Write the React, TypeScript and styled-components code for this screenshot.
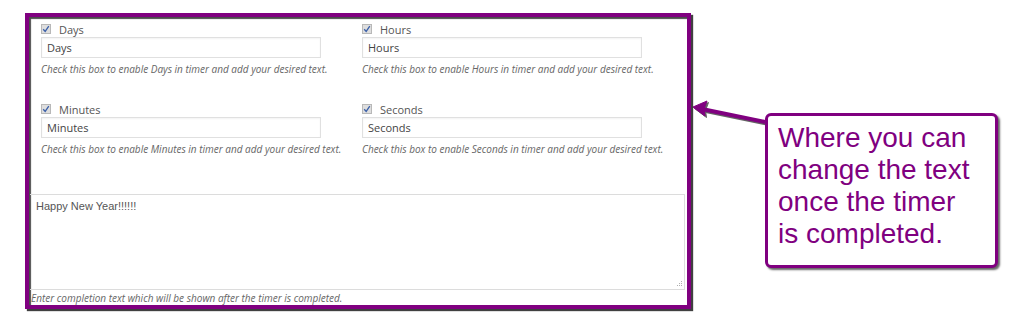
import styled, { createGlobalStyle } from 'styled-components';

const GlobalStyle = createGlobalStyle`
    html, body {
        margin: 0;
        background: #fff;
    }
`;

const PURPLE = '#800080';

interface FieldData {
    name: string;
}

const fields: FieldData[] = [
    { name: 'Days' },
    { name: 'Hours' },
    { name: 'Minutes' },
    { name: 'Seconds' },
];

const calloutLines = ['Where you can', 'change the text', 'once the timer', 'is completed.'];

function CheckBox() {
    return (
        <CheckBoxStyle>
            <svg width="8" height="8" viewBox="0 0 8 8">
                <path d="M1.2 4.2 L3.2 6.4 L6.8 1.2" fill="none" stroke="#3a5fa8" strokeWidth="1.3" />
            </svg>
        </CheckBoxStyle>
    );
}

function Field({ name }: FieldData) {
    return (
        <FieldStyle>
            <CheckRow>
                <CheckBox />
                <span>{name}</span>
            </CheckRow>
            <TextInput value={name} readOnly />
            <Description>Check this box to enable {name} in timer and add your desired text.</Description>
        </FieldStyle>
    );
}

function Arrow() {
    return (
        <ArrowSvg width="73" height="35" viewBox="0 0 73 35">
            <g transform="translate(1.5 1.5)" fill="#222" stroke="#222" opacity="0.7">
                <line x1="10" y1="14" x2="73" y2="27" strokeWidth="4" />
                <polygon points="1,12 15,6 12,14 13,21" strokeWidth="1" />
            </g>
            <line x1="10" y1="14" x2="73" y2="27" stroke={PURPLE} strokeWidth="4" />
            <polygon points="1,12 15,6 12,14 13,21" fill={PURPLE} stroke={PURPLE} strokeWidth="1" />
        </ArrowSvg>
    );
}

function App() {
    return (
        <>
            <GlobalStyle />
            <Page>
                <Frame>
                    <FieldsGrid>
                        {fields.map((f) => (
                            <Field key={f.name} name={f.name} />
                        ))}
                    </FieldsGrid>
                    <CompletionSection>
                        <TextAreaBox>
                            Happy New Year!!!!!!
                            <Grip width="8" height="8" viewBox="0 0 8 8">
                                <rect x="6" y="1" width="1" height="1" />
                                <rect x="6" y="3" width="1" height="1" />
                                <rect x="4" y="3" width="1" height="1" />
                                <rect x="6" y="5" width="1" height="1" />
                                <rect x="4" y="5" width="1" height="1" />
                                <rect x="2" y="5" width="1" height="1" />
                            </Grip>
                        </TextAreaBox>
                        <CompletionHint>Enter completion text which will be shown after the timer is completed.</CompletionHint>
                    </CompletionSection>
                </Frame>
                <Annotation>
                    <Arrow />
                    <Callout>
                        {calloutLines.map((line) => (
                            <CalloutLine key={line}>{line}</CalloutLine>
                        ))}
                    </Callout>
                </Annotation>
            </Page>
        </>
    );
}

const Page = styled.div`
    display: flex;
    align-items: flex-start;
    box-sizing: border-box;
    height: 313px;
    padding: 13px 0 0 25px;
    font-family: "Open Sans", "Noto Sans", sans-serif;
`;

const Frame = styled.div`
    width: 666px;
    height: 296px;
    box-sizing: border-box;
    border: 4px solid ${PURPLE};
    box-shadow: 2px 2px 1px rgba(0, 0, 0, 0.75), inset 2px 2px 1px rgba(0, 0, 0, 0.7);
    display: flex;
    flex-direction: column;
    background: #fff;
`;

const FieldsGrid = styled.div`
    display: grid;
    grid-template-columns: 321px 321px;
    row-gap: 26px;
    padding: 5px 0 0 12px;
`;

const FieldStyle = styled.div`
    display: flex;
    flex-direction: column;
`;

const CheckRow = styled.div`
    display: flex;
    align-items: center;
    gap: 8px;
    height: 14px;
    font-size: 11px;
    color: #555;
`;

const CheckBoxStyle = styled.span`
    width: 10px;
    height: 10px;
    box-sizing: border-box;
    border: 1px solid #b8b8b8;
    background: #dedede;
    display: flex;
    align-items: center;
    justify-content: center;
`;

const TextInput = styled.input`
    margin-top: 1px;
    width: 280px;
    height: 21px;
    box-sizing: border-box;
    border: 1px solid #e0e0e0;
    box-shadow: inset 0 1px 2px rgba(0, 0, 0, 0.05);
    padding: 0 5px;
    font-family: "Open Sans", "Noto Sans", sans-serif;
    font-size: 11px;
    color: #444;
    outline: none;
`;

const Description = styled.p`
    margin: 4px 0 0;
    font-size: 10px;
    line-height: 14px;
    font-style: italic;
    color: #666;
    white-space: nowrap;
`;

const CompletionSection = styled.div`
    margin-top: auto;
    display: flex;
    flex-direction: column;
`;

const TextAreaBox = styled.div`
    position: relative;
    height: 96px;
    margin: 0 2px 0 1px;
    box-sizing: border-box;
    border: 1px solid #dcdcdc;
    border-left: none;
    padding: 5px 6px;
    font-family: "Liberation Sans", Arial, sans-serif;
    font-size: 11px;
    color: #555;
`;

const Grip = styled.svg`
    position: absolute;
    right: 1px;
    bottom: 1px;
    fill: #b0b0b0;
`;

const CompletionHint = styled.p`
    margin: 0;
    padding: 2px 0 0 2px;
    font-size: 10px;
    line-height: 13px;
    font-style: italic;
    color: #666;
    white-space: nowrap;
`;

const Annotation = styled.div`
    display: flex;
    align-items: flex-start;
    margin: 82px 0 0 1px;
`;

const ArrowSvg = styled.svg`
    display: block;
    overflow: visible;
`;

const Callout = styled.div`
    margin-top: 18px;
    width: 233px;
    height: 155px;
    box-sizing: border-box;
    border: 3px solid ${PURPLE};
    border-radius: 6px;
    box-shadow: 2px 2px 2px rgba(0, 0, 0, 0.6);
    padding: 6px 10px 0 10px;
    font-family: "Liberation Sans", Arial, sans-serif;
    font-size: 28px;
    line-height: 32px;
    color: ${PURPLE};
    background: #fff;
`;

const CalloutLine = styled.div`
    white-space: nowrap;
`;

export default App;
